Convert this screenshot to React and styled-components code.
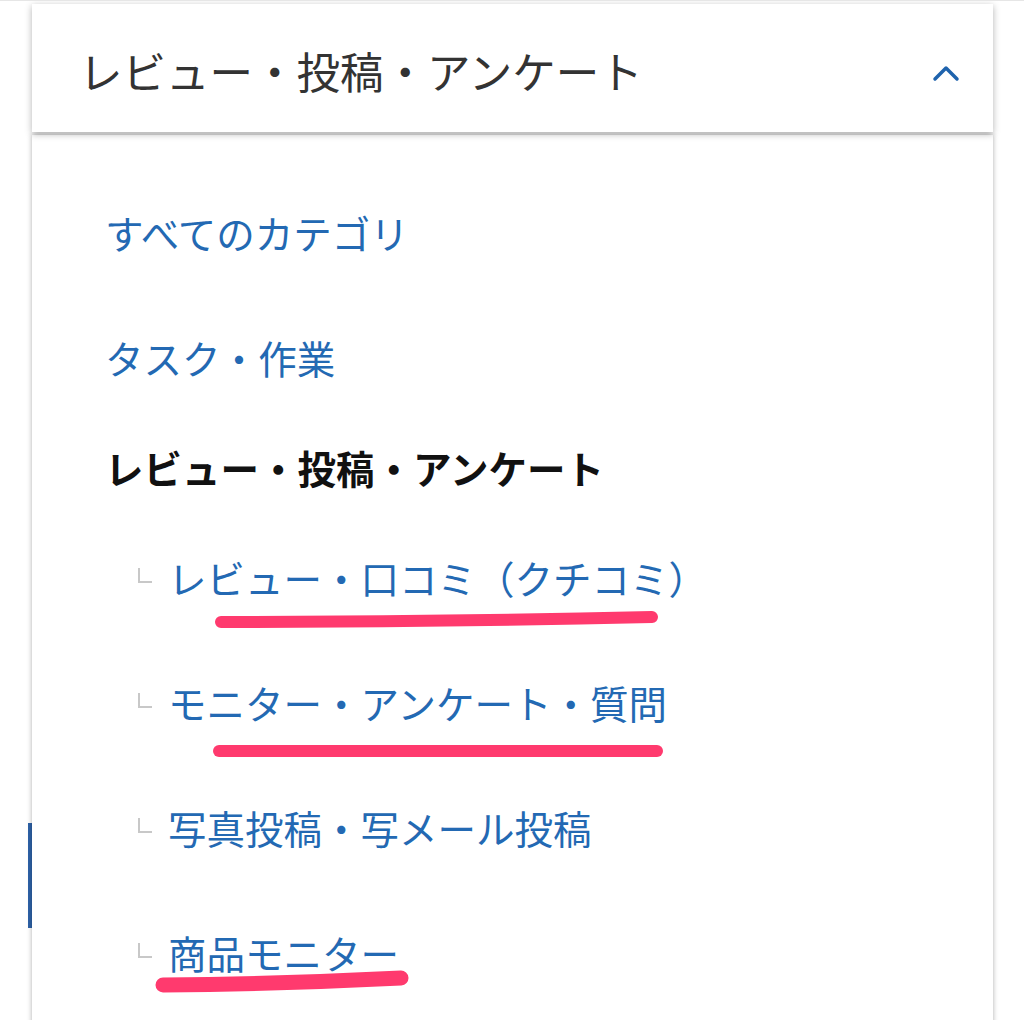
import styled, { createGlobalStyle } from "styled-components";

const GlobalStyle = createGlobalStyle`
	html, body {
		margin: 0;
		padding: 0;
		background: #ffffff;
	}
	body {
		font-family: "Noto Sans CJK JP", "Noto Sans", sans-serif;
	}
`;

const subItems = [
	{ label: "レビュー・口コミ（クチコミ）" },
	{ label: "モニター・アンケート・質問" },
	{ label: "写真投稿・写メール投稿" },
	{ label: "商品モニター" },
];

const App = () => {
	return (
		<Page>
			<GlobalStyle />
			<SideMarker />
			<Header>
				<HeaderTitle>レビュー・投稿・アンケート</HeaderTitle>
				<Chevron width="28" height="18" viewBox="0 0 28 18">
					<polyline points="3,15 14,4 25,15" />
				</Chevron>
			</Header>
			<Panel>
				<LinkRow>すべてのカテゴリ</LinkRow>
				<LinkRow>タスク・作業</LinkRow>
				<HeadingRow>レビュー・投稿・アンケート</HeadingRow>
				{subItems.map((item) => (
					<SubRow key={item.label}>
						<Branch />
						<SubLink>{item.label}</SubLink>
					</SubRow>
				))}
			</Panel>
			<Marks width="1024" height="1020" viewBox="0 0 1024 1020">
				<path d="M221 621 Q440 621 652 616" strokeWidth="12" />
				<path d="M219 750 L657 750" strokeWidth="12" />
				<path d="M163 984 Q280 983 401 977" strokeWidth="15" />
			</Marks>
		</Page>
	);
};

const Page = styled.div`
	position: relative;
	width: 1024px;
	height: 1020px;
	overflow: hidden;
	padding: 3px 31px 0 32px;
	box-sizing: border-box;
	background: #ffffff;
	border-top: 1px solid #e6e6e6;
`;

const SideMarker = styled.div`
	position: absolute;
	left: 28px;
	top: 822px;
	width: 4px;
	height: 105px;
	background: #2e62a8;
`;

const Header = styled.div`
	position: relative;
	z-index: 2;
	height: 128px;
	display: flex;
	align-items: center;
	justify-content: space-between;
	padding: 0 33px 0 47px;
	background: #ffffff;
	box-shadow: 0 2px 7px rgba(0, 0, 0, 0.3);
`;

const HeaderTitle = styled.span`
	font-size: 43.5px;
	line-height: 1;
	color: #333333;
	padding-top: 6px;
`;

const Chevron = styled.svg`
	margin-top: 10px;
	fill: none;
	stroke: #1f63ad;
	stroke-width: 3.5;
	stroke-linecap: round;
	stroke-linejoin: round;
`;

const Panel = styled.div`
	position: relative;
	z-index: 1;
	margin-top: 3px;
	height: 1000px;
	padding: 35px 0 0 73px;
	background: #ffffff;
	box-shadow: 0 0 5px rgba(0, 0, 0, 0.32);
	display: flex;
	flex-direction: column;
`;

const LinkRow = styled.a`
	height: 125px;
	display: flex;
	align-items: center;
	font-size: 38.5px;
	line-height: 1;
	color: #2369b3;
	text-decoration: none;
`;

const HeadingRow = styled.div`
	height: 95px;
	display: flex;
	align-items: center;
	font-size: 38.5px;
	font-weight: 700;
	line-height: 1;
	color: #111111;
`;

const SubRow = styled.div`
	height: 125px;
	display: flex;
	align-items: center;
	gap: 16px;
	padding-left: 33px;
`;

const Branch = styled.span`
	width: 12px;
	height: 13px;
	margin-top: -4px;
	border-left: 2px solid #c8c8c8;
	border-bottom: 2px solid #c8c8c8;
`;

const SubLink = styled.a`
	font-size: 38.5px;
	line-height: 1;
	color: #2369b3;
	text-decoration: none;
`;

const Marks = styled.svg`
	position: absolute;
	left: 0;
	top: 0;
	z-index: 5;
	pointer-events: none;
	fill: none;
	stroke: #ff3a6e;
	stroke-linecap: round;
`;

export default App;
